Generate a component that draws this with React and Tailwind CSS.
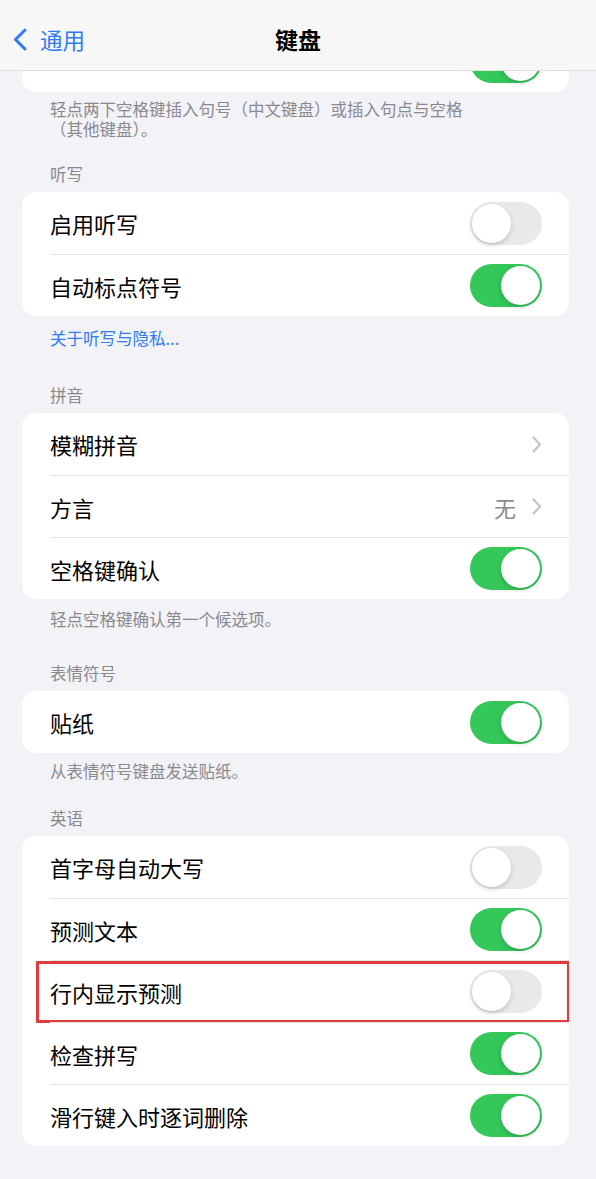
// 键盘设置页 — iOS 风格分组列表

const font = { fontFamily: '"Noto Sans CJK SC", "Noto Sans", sans-serif' }

function Toggle({ on }) {
  return (
    <div
      className={`w-[72px] h-[43px] rounded-full p-[2px] flex items-center shrink-0 ${
        on ? 'bg-[#34c759] justify-end' : 'bg-[#e9e9eb] justify-start'
      }`}
    >
      <div className="w-[39px] h-[39px] rounded-full bg-white shadow-[0_2px_5px_rgba(0,0,0,0.18)]" />
    </div>
  )
}

function Chevron() {
  return (
    <svg width="10" height="17" viewBox="0 0 10 17" className="shrink-0">
      <path d="M1.5 1.5 L8 8.5 L1.5 15.5" fill="none" stroke="#c4c4c7" strokeWidth="2.2" strokeLinecap="round" strokeLinejoin="round" />
    </svg>
  )
}

function Row({ label, first, toggle, chevron, value, marked }) {
  return (
    <div className="relative flex pl-[28px]">
      <div
        className={`flex flex-1 items-center h-[62px] pr-[27px] ${first ? '' : 'border-t border-[#e3e3e8]'}`}
      >
        <span className="flex-1 text-[22px] text-black leading-none">{label}</span>
        {value && <span className="text-[22px] text-[#8a8a8e] leading-none mr-[16px]">{value}</span>}
        {toggle !== undefined && <Toggle on={toggle} />}
        {chevron && <Chevron />}
      </div>
      {marked && (
        <div className="absolute left-[14px] -right-[1px] top-[1px] -bottom-[1px] border-[3px] border-[#e23b3f] pointer-events-none" />
      )}
    </div>
  )
}

function Card({ children, className = '' }) {
  return (
    <div className={`ml-[22px] mr-[27px] bg-white rounded-[14px] overflow-hidden ${className}`}>
      {children}
    </div>
  )
}

function Header({ children, className = '' }) {
  return (
    <p className={`px-[50px] text-[16.5px] leading-[20px] text-[#8a8a8e] mb-[8px] ${className}`}>{children}</p>
  )
}

function Footer({ children, className = '' }) {
  return (
    <p className={`px-[50px] text-[16.5px] leading-[20px] text-[#8a8a8e] ${className}`}>{children}</p>
  )
}

export default function App() {
  return (
    <div className="min-h-screen bg-[#f2f2f7] pb-[32px] overflow-hidden" style={font}>
      {/* 导航栏 */}
      <div className="relative z-10 h-[71px] bg-[#f7f7f7] border-b border-[#dedede] flex items-center pt-[9px]">
        <div className="flex items-center pl-[12px] w-[150px]">
          <svg width="16" height="23" viewBox="0 0 16 23">
            <path d="M13 2 L3.5 11.5 L13 21" fill="none" stroke="#2f7cf6" strokeWidth="3" strokeLinecap="round" strokeLinejoin="round" />
          </svg>
          <span className="ml-[12px] text-[22.5px] text-[#2f7cf6] leading-none">通用</span>
        </div>
        <h1 className="flex-1 text-center text-[23px] font-bold text-black leading-none">键盘</h1>
        <div className="w-[150px]" />
      </div>

      {/* 第一组被导航栏遮住，只露出底部 */}
      <div className="-mt-[41px]">
        <Card>
          <Row label="" first toggle={true} />
        </Card>
        <Footer className="mt-[7px]">
          轻点两下空格键插入句号（中文键盘）或插入句点与空格
          <br />
          （其他键盘）。
        </Footer>

        <Header className="mt-[25px]">听写</Header>
        <Card>
          <Row label="启用听写" first toggle={false} />
          <Row label="自动标点符号" toggle={true} />
        </Card>
        <p className="px-[50px] mt-[12px] text-[16.5px] leading-[20px] text-[#2f7cf6]">关于听写与隐私...</p>

        <Header className="mt-[37px]">拼音</Header>
        <Card>
          <Row label="模糊拼音" first chevron />
          <Row label="方言" value="无" chevron />
          <Row label="空格键确认" toggle={true} />
        </Card>
        <Footer className="mt-[10px]">轻点空格键确认第一个候选项。</Footer>

        <Header className="mt-[34px]">表情符号</Header>
        <Card>
          <Row label="贴纸" first toggle={true} />
        </Card>
        <Footer className="mt-[8px]">从表情符号键盘发送贴纸。</Footer>

        <Header className="mt-[27px]">英语</Header>
        <Card>
          <Row label="首字母自动大写" first toggle={false} />
          <Row label="预测文本" toggle={true} />
          <Row label="行内显示预测" toggle={false} marked />
          <Row label="检查拼写" toggle={true} />
          <Row label="滑行键入时逐词删除" toggle={true} />
        </Card>
      </div>
    </div>
  )
}
